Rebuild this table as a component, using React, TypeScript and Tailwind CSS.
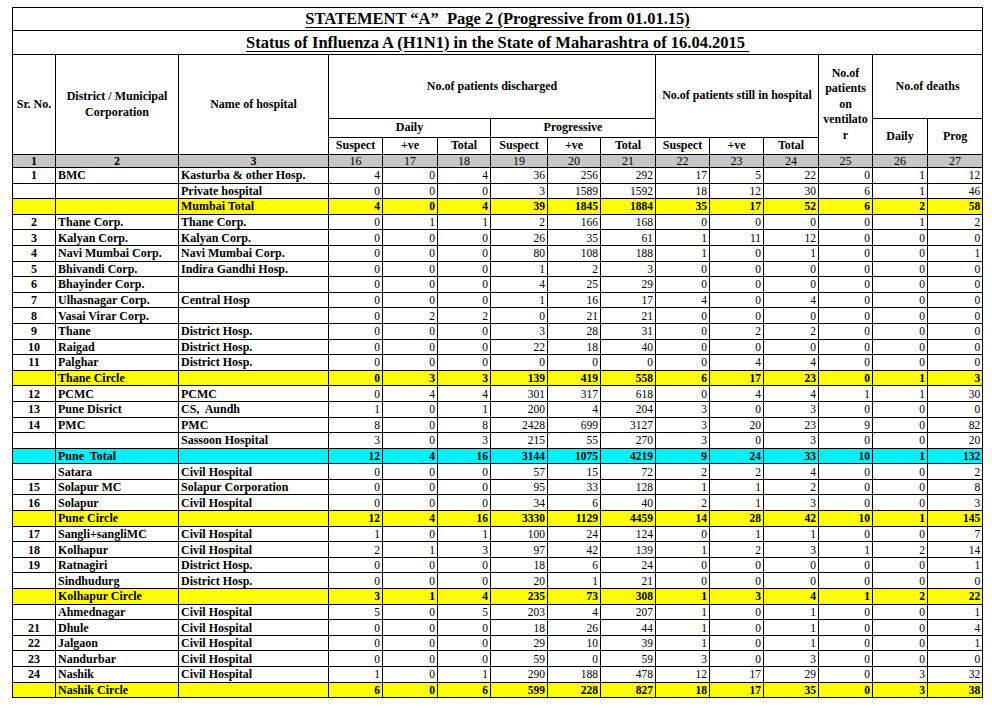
import React from "react";

type Row = {
  sr: string;
  d: string;
  h: string;
  v: number[];
  hl?: "y" | "c";
};

const rows: Row[] = [
  { sr: "1", d: "BMC", h: "Kasturba & other Hosp.", v: [4, 0, 4, 36, 256, 292, 17, 5, 22, 0, 1, 12] },
  { sr: "", d: "", h: "Private hospital", v: [0, 0, 0, 3, 1589, 1592, 18, 12, 30, 6, 1, 46] },
  { sr: "", d: "", h: "Mumbai Total", v: [4, 0, 4, 39, 1845, 1884, 35, 17, 52, 6, 2, 58], hl: "y" },
  { sr: "2", d: "Thane Corp.", h: "Thane Corp.", v: [0, 1, 1, 2, 166, 168, 0, 0, 0, 0, 1, 2] },
  { sr: "3", d: "Kalyan Corp.", h: "Kalyan Corp.", v: [0, 0, 0, 26, 35, 61, 1, 11, 12, 0, 0, 0] },
  { sr: "4", d: "Navi Mumbai Corp.", h: "Navi Mumbai Corp.", v: [0, 0, 0, 80, 108, 188, 1, 0, 1, 0, 0, 1] },
  { sr: "5", d: "Bhivandi Corp.", h: "Indira Gandhi Hosp.", v: [0, 0, 0, 1, 2, 3, 0, 0, 0, 0, 0, 0] },
  { sr: "6", d: "Bhayinder Corp.", h: "", v: [0, 0, 0, 4, 25, 29, 0, 0, 0, 0, 0, 0] },
  { sr: "7", d: "Ulhasnagar Corp.", h: "Central Hosp", v: [0, 0, 0, 1, 16, 17, 4, 0, 4, 0, 0, 0] },
  { sr: "8", d: "Vasai Virar Corp.", h: "", v: [0, 2, 2, 0, 21, 21, 0, 0, 0, 0, 0, 0] },
  { sr: "9", d: "Thane", h: "District Hosp.", v: [0, 0, 0, 3, 28, 31, 0, 2, 2, 0, 0, 0] },
  { sr: "10", d: "Raigad", h: "District Hosp.", v: [0, 0, 0, 22, 18, 40, 0, 0, 0, 0, 0, 0] },
  { sr: "11", d: "Palghar", h: "District Hosp.", v: [0, 0, 0, 0, 0, 0, 0, 4, 4, 0, 0, 0] },
  { sr: "", d: "Thane Circle", h: "", v: [0, 3, 3, 139, 419, 558, 6, 17, 23, 0, 1, 3], hl: "y" },
  { sr: "12", d: "PCMC", h: "PCMC", v: [0, 4, 4, 301, 317, 618, 0, 4, 4, 1, 1, 30] },
  { sr: "13", d: "Pune Disrict", h: "CS,  Aundh", v: [1, 0, 1, 200, 4, 204, 3, 0, 3, 0, 0, 0] },
  { sr: "14", d: "PMC", h: "PMC", v: [8, 0, 8, 2428, 699, 3127, 3, 20, 23, 9, 0, 82] },
  { sr: "", d: "", h: "Sassoon Hospital", v: [3, 0, 3, 215, 55, 270, 3, 0, 3, 0, 0, 20] },
  { sr: "", d: "Pune  Total", h: "", v: [12, 4, 16, 3144, 1075, 4219, 9, 24, 33, 10, 1, 132], hl: "c" },
  { sr: "", d: "Satara", h: "Civil Hospital", v: [0, 0, 0, 57, 15, 72, 2, 2, 4, 0, 0, 2] },
  { sr: "15", d: "Solapur MC", h: "Solapur Corporation", v: [0, 0, 0, 95, 33, 128, 1, 1, 2, 0, 0, 8] },
  { sr: "16", d: "Solapur", h: "Civil Hospital", v: [0, 0, 0, 34, 6, 40, 2, 1, 3, 0, 0, 3] },
  { sr: "", d: "Pune Circle", h: "", v: [12, 4, 16, 3330, 1129, 4459, 14, 28, 42, 10, 1, 145], hl: "y" },
  { sr: "17", d: "Sangli+sangliMC", h: "Civil Hospital", v: [1, 0, 1, 100, 24, 124, 0, 1, 1, 0, 0, 7] },
  { sr: "18", d: "Kolhapur", h: "Civil Hospital", v: [2, 1, 3, 97, 42, 139, 1, 2, 3, 1, 2, 14] },
  { sr: "19", d: "Ratnagiri", h: "District Hosp.", v: [0, 0, 0, 18, 6, 24, 0, 0, 0, 0, 0, 1] },
  { sr: "", d: "Sindhudurg", h: "District Hosp.", v: [0, 0, 0, 20, 1, 21, 0, 0, 0, 0, 0, 0] },
  { sr: "", d: "Kolhapur Circle", h: "", v: [3, 1, 4, 235, 73, 308, 1, 3, 4, 1, 2, 22], hl: "y" },
  { sr: "", d: "Ahmednagar", h: "Civil Hospital", v: [5, 0, 5, 203, 4, 207, 1, 0, 1, 0, 0, 1] },
  { sr: "21", d: "Dhule", h: "Civil Hospital", v: [0, 0, 0, 18, 26, 44, 1, 0, 1, 0, 0, 4] },
  { sr: "22", d: "Jalgaon", h: "Civil Hospital", v: [0, 0, 0, 29, 10, 39, 1, 0, 1, 0, 0, 1] },
  { sr: "23", d: "Nandurbar", h: "Civil Hospital", v: [0, 0, 0, 59, 0, 59, 3, 0, 3, 0, 0, 0] },
  { sr: "24", d: "Nashik", h: "Civil Hospital", v: [1, 0, 1, 290, 188, 478, 12, 17, 29, 0, 3, 32] },
  { sr: "", d: "Nashik Circle", h: "", v: [6, 0, 6, 599, 228, 827, 18, 17, 35, 0, 3, 38], hl: "y" },
];

const widths = [
  "w-[43px]", "w-[123px]", "w-[150px]",
  "w-[54px]", "w-[55px]", "w-[53px]",
  "w-[57px]", "w-[53px]", "w-[55px]",
  "w-[54px]", "w-[54px]", "w-[55px]",
  "w-[54px]", "w-[55px]", "w-[55px]",
];

const colNums = ["16", "17", "18", "19", "20", "21", "22", "23", "24", "25", "26", "27"];

const th = "border border-black font-bold text-[12px] leading-[15.5px] text-center align-middle p-0";

export default function App() {
  return (
    <div className="bg-white w-[992px] h-[712px] overflow-hidden pt-[7px] pl-[12px] text-black [font-family:'Liberation_Serif','Times_New_Roman',serif]">
      <table className="border-collapse table-fixed w-[971px] [font-family:'Liberation_Serif','Times_New_Roman',serif]">
        <colgroup>
          {widths.map((w, i) => (
            <col key={i} className={w} />
          ))}
        </colgroup>
        <tbody>
          <tr className="h-[23px]">
            <td colSpan={15} className="border border-black p-0 text-center align-middle font-bold text-[16.5px] leading-[20px]">
              <span className="underline underline-offset-[3px] whitespace-pre">STATEMENT “A”  Page 2 (Progressive from 01.01.15)</span>
            </td>
          </tr>
          <tr className="h-[24px]">
            <td colSpan={15} className="border border-black p-0 text-center align-middle font-bold text-[16.5px] leading-[20px]">
              <span className="underline underline-offset-[3px] whitespace-pre">Status of Influenza A (H1N1) in the State of Maharashtra of 16.04.2015 </span>
            </td>
          </tr>
          <tr className="h-[64px]">
            <td rowSpan={3} className={th}>Sr. No.</td>
            <td rowSpan={3} className={th}>
              District / Municipal
              <br />
              Corporation
            </td>
            <td rowSpan={3} className={th}>Name of hospital</td>
            <td colSpan={6} className={th}>No.of patients discharged</td>
            <td colSpan={3} rowSpan={2} className={th}>No.of patients still in hospital</td>
            <td rowSpan={3} className={th}>
              No.of
              <br />
              patients
              <br />
              on
              <br />
              ventilato
              <br />r
            </td>
            <td colSpan={2} className={th}>No.of deaths</td>
          </tr>
          <tr className="h-[19px]">
            <td colSpan={3} className={th}>Daily</td>
            <td colSpan={3} className={th}>Progressive</td>
            <td rowSpan={2} className={th}>Daily</td>
            <td rowSpan={2} className={th}>Prog</td>
          </tr>
          <tr className="h-[17px]">
            {["Suspect", "+ve", "Total", "Suspect", "+ve", "Total", "Suspect", "+ve", "Total"].map((t, i) => (
              <td key={i} className={th}>{t}</td>
            ))}
          </tr>
          <tr className="h-[13px] bg-[#c6c6c6]">
            {["1", "2", "3"].map((t) => (
              <td key={t} className="border border-black p-0 text-center font-bold text-[12px] leading-[12px]">{t}</td>
            ))}
            {colNums.map((t) => (
              <td key={t} className="border border-black p-0 text-center text-[12px] leading-[12px]">{t}</td>
            ))}
          </tr>
          {rows.map((r, i) => {
            const bg = r.hl === "y" ? "bg-[#ffff00]" : r.hl === "c" ? "bg-[#00f0ff]" : "bg-white";
            const bold = r.hl ? "font-bold text-[11.5px]" : "font-normal text-[11.5px]";
            return (
              <tr key={i} className={`h-[15.6px] ${bg}`}>
                <td className="border border-black p-0 text-center font-bold text-[12px] leading-[14px] whitespace-nowrap">{r.sr}</td>
                <td className="border border-black py-0 px-[2px] text-left font-bold text-[12px] leading-[14px] whitespace-pre overflow-hidden">{r.d}</td>
                <td className="border border-black py-0 px-[2px] text-left font-bold text-[12px] leading-[14px] whitespace-pre overflow-hidden">{r.h}</td>
                {r.v.map((n, j) => (
                  <td key={j} className={`border border-black py-0 pl-0 pr-[2px] text-right leading-[14px] whitespace-nowrap ${bold}`}>{n}</td>
                ))}
              </tr>
            );
          })}
        </tbody>
      </table>
    </div>
  );
}
